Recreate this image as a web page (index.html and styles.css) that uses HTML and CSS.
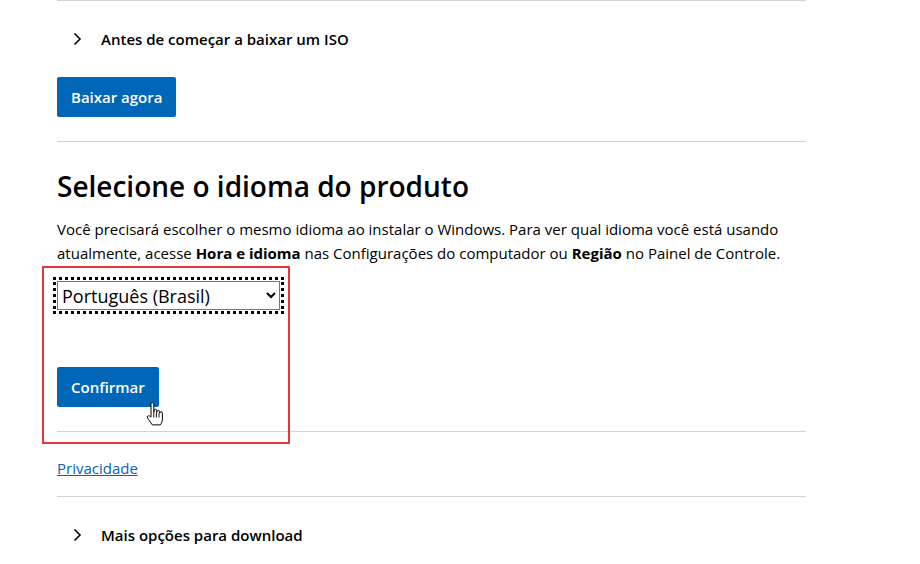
FILE: index.html
```html
<!DOCTYPE html>
<html lang="pt-BR">
<head>
<meta charset="utf-8">
<title>Baixar Windows</title>
<link rel="stylesheet" href="styles.css">
</head>
<body>
<main class="page">
  <hr class="divider">
  <div class="accordion">
    <svg class="chev" width="10" height="14" viewBox="0 0 10 14"><path d="M2.5 1.5 L8 7 L2.5 12.5" fill="none" stroke="#000" stroke-width="1.6"/></svg>
    <span class="acc-title">Antes de começar a baixar um ISO</span>
  </div>
  <button class="btn btn-download">Baixar agora</button>
  <hr class="divider divider-mid">
  <h2 class="title">Selecione o idioma do produto</h2>
  <p class="lead">Você precisará escolher o mesmo idioma ao instalar o Windows. Para ver qual idioma você está usando atualmente, acesse <b>Hora e idioma</b> nas Configurações do computador ou <b>Região</b> no Painel de Controle.</p>
  <div class="select-wrap">
    <select class="lang">
      <option>Português (Brasil)</option>
    </select>
  </div>
  <button class="btn btn-confirm">Confirmar</button>
  <hr class="divider divider-low">
  <a class="privacy" href="#">Privacidade</a>
  <hr class="divider divider-foot">
  <div class="accordion accordion-foot">
    <svg class="chev" width="10" height="14" viewBox="0 0 10 14"><path d="M2.5 1.5 L8 7 L2.5 12.5" fill="none" stroke="#000" stroke-width="1.6"/></svg>
    <span class="acc-title">Mais opções para download</span>
  </div>
  <div class="highlight"></div>
  <svg class="cursor" width="20" height="26" viewBox="0 0 20 26">
    <path d="M6 2.2c0-.9.6-1.5 1.4-1.5s1.4.6 1.4 1.5v8.3l.3-.1V8.6c0-.8.6-1.4 1.3-1.4s1.3.6 1.3 1.4v2l.3-.1V9.6c0-.8.6-1.3 1.3-1.3s1.3.5 1.3 1.3v1.5l.3-.1c0-.7.6-1.2 1.2-1.2.7 0 1.3.5 1.3 1.3v6.2c0 1.6-.4 2.9-1.1 4l-.9 1.6H7.3l-3.6-5.200c-.8-1.1-1.4-1.9-1.4-2.8 0-.7.6-1.2 1.3-1.2.6 0 1.1.3 1.6.9L6 15V2.2z" fill="#fff" stroke="#000" stroke-width="1" stroke-linejoin="round"/>
    <path d="M8.8 11v4.5M11.4 11v4.5M14 11.2v4.3" stroke="#000" stroke-width="0.9"/>
  </svg>
</main>
</body>
</html>
```
FILE: styles.css
```css
html, body {
  margin: 0;
  padding: 0;
  background: #fff;
}
body {
  font-family: "Segoe UI", "Open Sans", "Noto Sans", sans-serif;
  color: #000;
}
.page {
  position: relative;
  margin-left: 57px;
  width: 749px;
  display: flex;
  flex-direction: column;
  align-items: flex-start;
}
.divider {
  width: 100%;
  margin: 0;
  border: 0;
  border-top: 1px solid #d2d2d2;
  height: 0;
}
.accordion {
  display: flex;
  align-items: center;
  height: 22px;
  margin-top: 27px;
  padding-left: 15px;
}
.chev {
  margin-right: 19px;
}
.acc-title {
  font-size: 15px;
  font-weight: 600;
  line-height: 22px;
}
.btn {
  font-family: inherit;
  background: #0067b8;
  color: #fff;
  border: 0;
  border-radius: 2px;
  height: 40px;
  padding: 0 14px;
  font-size: 15px;
  font-weight: 600;
}
.btn-download {
  margin-top: 27px;
}
.divider-mid {
  margin-top: 24px;
}
.title {
  font-size: 28px;
  font-weight: 600;
  line-height: 40px;
  margin: 24px 0 0;
}
.lead {
  font-size: 15px;
  line-height: 24px;
  margin: 11px 0 0;
}
.select-wrap {
  margin-top: 16px;
  outline: 3px dotted #000;
  outline-offset: 1px;
}
.lang {
  display: block;
  width: 223px;
  height: 29px;
  font-family: inherit;
  font-size: 18px;
  border: 1px solid #767676;
  border-radius: 0;
  background: #fff;
  color: #000;
  padding: 0;
}
.btn-confirm {
  margin-top: 57px;
}
.divider-low {
  margin-top: 24px;
}
.privacy {
  margin-top: 25px;
  font-size: 15px;
  line-height: 22px;
  color: #0067b8;
  text-decoration: underline;
}
.divider-foot {
  margin-top: 17px;
}
.accordion-foot {
  margin-top: 27px;
}
.highlight {
  position: absolute;
  left: -15px;
  top: 266px;
  width: 244px;
  height: 174px;
  border: 2px solid #e8343a;
}
.cursor {
  position: absolute;
  left: 88px;
  top: 402px;
}
```
